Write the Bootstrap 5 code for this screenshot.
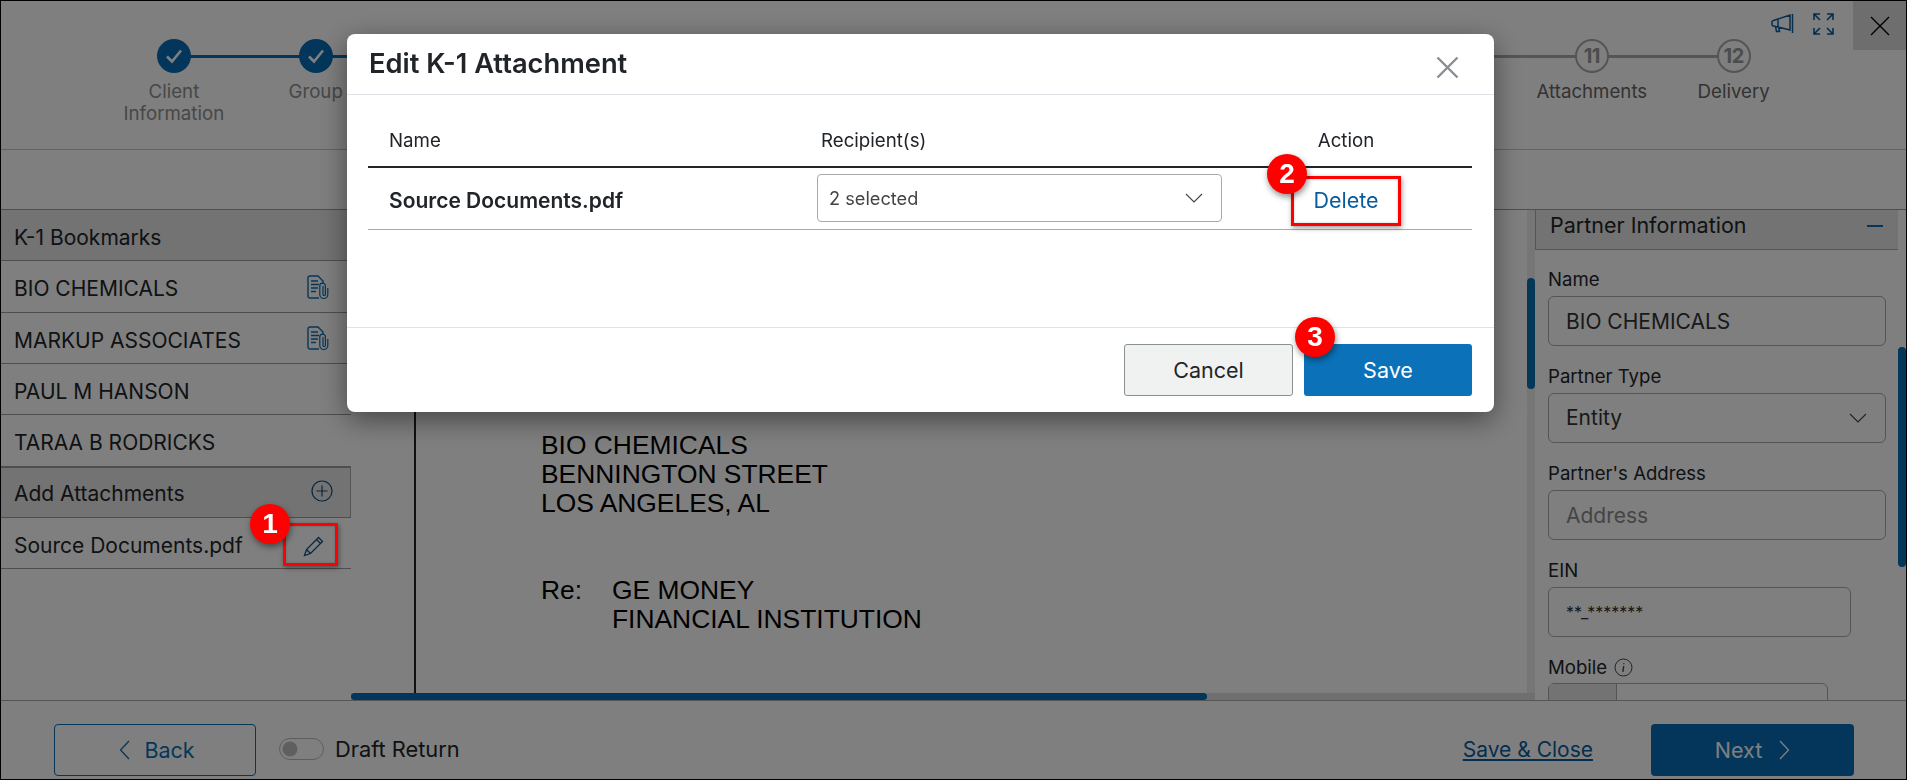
<!doctype html>
<html lang="en">
<head>
<meta charset="utf-8">
<title>Edit K-1 Attachment</title>
<link href="https://cdn.jsdelivr.net/npm/bootstrap@5.3.0/dist/css/bootstrap.min.css" rel="stylesheet">
<style>
html,body{height:100%;overflow:hidden}
body{font-family:Inter,"Noto Sans",sans-serif;background:#fff;color:#212529;font-size:18px}
.app-root{width:1907px;height:780px;border:1px solid #000;overflow:hidden;display:flex;flex-direction:column;position:relative}
.top-bar{height:149px;border-bottom:1px solid #c6c6c6;flex:none;position:relative}
.stepper{padding:38px 0 0 102px}
.step{width:141.8px;flex:none;text-align:center;position:relative;font-size:18.7px;line-height:22px;color:#8f8f8f}
.step .dot{width:34px;height:34px;border-radius:50%;margin:0 auto 8px;display:flex;align-items:center;justify-content:center;position:relative;z-index:1;background:#fff}
.step.done .dot{background:#066db5}
.step.todo .dot{border:2px solid #aaa;color:#999;font-weight:700;font-size:20px;letter-spacing:-.5px}
.step.todo{color:#666}
.step:not(:last-child)::after{content:"";position:absolute;left:50%;width:100%;top:15.5px;height:3px;background:#aaa}
.step.done::after{background:#066db5}
.top-tools{position:absolute;top:0;right:0;height:49px}
.tool-a{margin:12px 18px 0 0}
.tool-b{margin:11px 18px 0 0}
.close-box{width:53px;height:49px;background:#dcdcdc}
.tool-strip{height:60px;flex:none;border-bottom:1px solid #9c9c9c}
.work{flex:1 1 0;min-height:0;border-bottom:1px solid #aaa}
.side{width:350px;flex:none}
.side-row{height:51.35px;padding:5px 22px 0 13px;border-bottom:1px solid #9c9c9c;font-size:21px;white-space:nowrap}
.side-row svg{margin-top:-5px}
.side-row.head{background:#e6e6e6}
.side-row.add{background:#e6e6e6;border-top:1px solid #9c9c9c;border-right:1px solid #aaa;padding:3px 17px 0 13px}
.side-row svg.pen{margin:0 4px 0 0}
.center-col{flex:1 1 0;min-width:0}
.doc-wrap{flex:1 1 0;min-height:0}
.doc{flex:1 1 0;min-width:0}
.doc-gutter{width:65px;border-right:2px solid #222;flex:none}
.doc-page{padding:221px 0 0 125px;font-family:"Liberation Sans",Arial,sans-serif;font-size:26.4px;line-height:29px;color:#000;white-space:nowrap}
.doc-re{margin-top:58px}
.doc-re span:first-child{width:71px;display:inline-block}
.doc-re div{padding-left:71px}
.v-track{width:8px;background:#ececec;flex:none;padding-top:68px}
.v-thumb{width:8px;border-radius:4px;background:#0a6fb3}
.h-track{height:7px;background:#dedede;flex:none}
.h-thumb{height:7px;width:856px;background:#066db5;border-radius:4px}
.right-panel{width:371px;flex:none}
.panel-body{flex:1 1 0;min-width:0;overflow:hidden;position:relative}
.panel-head{height:40px;background:#e6e6e6;border-bottom:1px solid #aaa;border-left:1px solid #aaa;padding:0 15px 8px 14px;font-size:21.5px}
.panel-head i{display:block;width:16px;height:2px;background:#066db5}
.panel-form{padding:18px 0 0 13px;font-size:18.6px;width:351px}
.panel-form label{display:block;line-height:22px;margin-bottom:6px}
.panel-form .form-control,.panel-form .form-select{height:50px;border:1px solid #aaa;border-radius:6px;font-size:21px;color:#333;padding-left:17px;margin-bottom:19px;box-shadow:none}
.panel-form .form-control::placeholder{color:#8a8a8a}
.form-select{background-image:url("data:image/svg+xml,%3csvg xmlns='http://www.w3.org/2000/svg' viewBox='0 0 18 10'%3e%3cpath fill='none' stroke='%23444' stroke-width='1.1' d='M1 1l8 8 8-8'/%3e%3c/svg%3e");background-size:18px 10px;background-position:right 18px center}
.panel-form .ein{width:303px;font-size:16px;padding-top:0;padding-bottom:0}
.mobile{width:280px;height:50px;border:1px solid #aaa;border-radius:6px 6px 0 0;margin-top:-1px}
.mobile i{display:block;width:68px;height:100%;background:#e6e6e6;border-right:1px solid #aaa}
.info{display:inline-block;vertical-align:-3px;margin-left:2px}
.r-track{width:8px;flex:none;padding-top:137px}
.foot{height:78px;flex:none;padding:20px 52px 0 53px}
.back-btn{width:202px;height:52px;padding:0 0 0 4px;border:1px solid #0a6fb3;border-radius:4px;color:#0a6fb3;background:#fff;font-size:21.5px;gap:14px}
.draft{margin-left:23px;gap:11px;font-size:21.8px;color:#212529}
.draft .form-check-input{width:45px;height:22px;margin:0;float:none;border-color:#bbb}
.save-close{color:#0a5c9c;font-size:21px;margin:0 58px 0 0}
.next-btn{width:203px;height:52px;padding:0;background:#066db5;border:0;border-radius:4px;color:#fff;font-size:21.5px;gap:17px}
.modal.edit-modal{display:block;z-index:1055}
.edit-modal .modal-dialog{max-width:1147px;width:1147px;margin:34px 0 0 347px}
.edit-modal .modal-content{border:0;border-radius:8px;height:378px;box-shadow:0 8px 28px rgba(0,0,0,.45)}
.edit-modal .modal-header{height:61px;padding:0 22px;border-bottom:1px solid #e1e1e8}
.edit-modal .modal-title{font-size:27.3px;font-weight:600;line-height:1}
.x-btn{background:none;border:0;padding:0;line-height:0;margin:6px 13px 0 0}
.edit-modal .modal-body{padding:0 22px 0 21px;flex:1 1 0}
.k-table{table-layout:fixed;width:1104px;margin:0;font-size:18.7px;color:#212529}
.k-table th{height:72px;font-weight:400;border-bottom:2px solid #212529;vertical-align:bottom;padding:0 0 11px 0}
.k-table td{height:62px;border-bottom:1px solid #aaa;vertical-align:middle;padding:0}
.k-table .c1{width:437px;padding-left:21px}
.k-table .c2{width:429px;padding-left:16px}
.k-table td.c2{padding-left:12px;padding-right:12px}
.k-table .c3{padding-right:14px;text-align:center}
.k-table td.c1,.k-table td.c3{padding-top:4px}
.k-name{font-weight:600;font-size:21px}
.k-select{height:48px;border-radius:4px;border-color:#aaa;font-size:18.2px;color:#444;padding-left:11px}
.del-link{color:#0a5c9c;text-decoration:none;font-size:21.5px}
.edit-modal .modal-footer{height:85px;padding:16px 22px 0;border-top:1px solid #e2e2e2;gap:11px;align-items:flex-start}
.edit-modal .modal-footer .btn{margin:0;height:52px;padding:0;font-size:21.5px;border-radius:3px}
.btn-cancel{width:169px;background:#f0f1f1;border:1px solid #8a8f94;color:#212529}
.btn-save{width:168px;background:#0b72b9;border:0;color:#fff}
.marks{position:fixed;inset:0;z-index:1060;pointer-events:none}
.bubble{position:absolute;width:40px;height:40px;border-radius:50%;background:#f00;color:#fff;font:700 28px/40px "Liberation Sans",sans-serif;text-align:center;box-shadow:1px 3px 6px rgba(0,0,0,.45)}
.red-box{position:absolute;border:3px solid #f00;box-shadow:1px 2px 5px rgba(0,0,0,.4),inset 0 0 3px rgba(0,0,0,.2)}
</style>
</head>
<body>
<div class="app-root">
  <header class="top-bar">
    <div class="stepper d-flex">
      <div class="step done"><div class="dot"><svg width="18" height="16" viewBox="0 0 18 16"><path d="M2 8.500l5 5L16 2.500" fill="none" stroke="#fff" stroke-width="2.600"/></svg></div>Client<br>Information</div>
      <div class="step done"><div class="dot"><svg width="18" height="16" viewBox="0 0 18 16"><path d="M2 8.500l5 5L16 2.500" fill="none" stroke="#fff" stroke-width="2.600"/></svg></div>Group</div>
      <div class="step done"><div class="dot"></div></div>
      <div class="step todo"><div class="dot"></div></div>
      <div class="step todo"><div class="dot"></div></div>
      <div class="step todo"><div class="dot"></div></div>
      <div class="step todo"><div class="dot"></div></div>
      <div class="step todo"><div class="dot"></div></div>
      <div class="step todo"><div class="dot"></div></div>
      <div class="step todo"><div class="dot"></div></div>
      <div class="step todo"><div class="dot">11</div>Attachments</div>
      <div class="step todo"><div class="dot">12</div>Delivery</div>
    </div>
    <div class="top-tools d-flex align-items-start">
      <svg class="tool-a" width="23" height="22" viewBox="0 0 23 22" fill="none" stroke="#0a5c9c" stroke-width="1.500"><path d="M2.500 7.500L19 2v15L2.500 13a1.500 1.500 0 0 1-1.500-1.500v-2.500a1.500 1.500 0 0 1 1.500-1.500zM7 6v8M4.500 13.500l1 5h3l-.8-4M21.500 1v19"/></svg>
      <svg class="tool-b" width="23" height="24" viewBox="0 0 23 24" fill="none" stroke="#0a5c9c" stroke-width="1.600"><path d="M2 8V2h6M2 2l6 6M21 8V2h-6M21 2l-6 6M2 16v6h6M2 22l6-6M21 16v6h-6M21 22l-6-6"/></svg>
      <div class="close-box d-flex align-items-center justify-content-center"><svg width="20" height="20" viewBox="0 0 20 20" stroke="#000" stroke-width="1.400"><path d="M1 1l18 18M19 1L1 19"/></svg></div>
    </div>
  </header>
  <div class="tool-strip"></div>
  <main class="work d-flex">
    <aside class="side">
      <div class="side-row head d-flex align-items-center">K-1 Bookmarks</div>
      <div class="side-row d-flex align-items-center justify-content-between">BIO CHEMICALS
        <svg width="22" height="24" viewBox="0 0 22 24" fill="none" stroke="#0a6fb3" stroke-width="1.400"><path d="M12 23H3a2 2 0 0 1-2-2V3a2 2 0 0 1 2-2h8l5 5v3M4 6h7M4 9.500h8M4 13h7M4 16.500h5"/><path d="M16 11v8.500a1.200 1.200 0 0 0 2.400 0V11a2.800 2.800 0 0 0-5.600 0v8.500a4 4 0 0 0 8 0V13" stroke-width="1.200"/></svg></div>
      <div class="side-row d-flex align-items-center justify-content-between">MARKUP ASSOCIATES
        <svg width="22" height="24" viewBox="0 0 22 24" fill="none" stroke="#0a6fb3" stroke-width="1.400"><path d="M12 23H3a2 2 0 0 1-2-2V3a2 2 0 0 1 2-2h8l5 5v3M4 6h7M4 9.500h8M4 13h7M4 16.500h5"/><path d="M16 11v8.500a1.200 1.200 0 0 0 2.400 0V11a2.800 2.800 0 0 0-5.600 0v8.500a4 4 0 0 0 8 0V13" stroke-width="1.200"/></svg></div>
      <div class="side-row d-flex align-items-center">PAUL M HANSON</div>
      <div class="side-row d-flex align-items-center">TARAA B RODRICKS</div>
      <div class="side-row add d-flex align-items-center justify-content-between">Add Attachments
        <svg width="22" height="22" viewBox="0 0 22 22" fill="none" stroke="#0a4f85" stroke-width="1.200"><circle cx="11" cy="11" r="10"/><path d="M11 5.500v11M5.500 11h11"/></svg></div>
      <div class="side-row d-flex align-items-center justify-content-between">Source Documents.pdf
        <svg class="pen" width="22" height="22" viewBox="0 0 22 22" fill="none" stroke="#0a4f85" stroke-width="1.300"><path d="M1.500 20.500l2-6L15.500 2.500l4 4-12 12zM3.500 14.500l4 4M13.500 4.500l4 4"/></svg></div>
    </aside>
    <div class="center-col d-flex flex-column">
      <div class="doc-wrap d-flex">
        <div class="doc d-flex">
          <div class="doc-gutter"></div>
          <div class="doc-page">
            <div>BIO CHEMICALS</div><div>BENNINGTON STREET</div><div>LOS ANGELES, AL</div>
            <div class="doc-re"><span>Re:</span><span>GE MONEY</span><div>FINANCIAL INSTITUTION</div></div>
          </div>
        </div>
        <div class="v-track"><div class="v-thumb" style="height:111px"></div></div>
      </div>
      <div class="h-track"><div class="h-thumb"></div></div>
    </div>
    <section class="right-panel d-flex">
      <div class="panel-body">
        <div class="panel-head d-flex align-items-center justify-content-between">Partner Information<i></i></div>
        <form class="panel-form">
          <label>Name</label><input class="form-control" value="BIO CHEMICALS">
          <label>Partner Type</label><select class="form-select"><option>Entity</option></select>
          <label>Partner's Address</label><input class="form-control" placeholder="Address">
          <label>EIN</label><input class="form-control ein" value="**_*******">
          <label>Mobile <svg class="info" width="19" height="19" viewBox="0 0 19 19" fill="none" stroke="#444"><circle cx="9.500" cy="9.500" r="8.500"/><path d="M9.800 5.200v1M9.700 8.200l-.8 5.600" stroke-width="1.400"/></svg></label>
          <div class="mobile"><i></i></div>
        </form>
      </div>
      <div class="r-track"><div class="v-thumb" style="height:220px"></div></div>
    </section>
  </main>
  <footer class="foot d-flex align-items-center">
    <button class="back-btn btn d-flex align-items-center justify-content-center"><svg width="11" height="20" viewBox="0 0 11 20" fill="none" stroke="currentColor" stroke-width="1.300"><path d="M10 1L1.500 10l8.500 9"/></svg>Back</button>
    <div class="draft form-check form-switch d-flex align-items-center p-0"><input class="form-check-input" type="checkbox" aria-label="Draft Return"><span>Draft Return</span></div>
    <a class="save-close ms-auto" href="#">Save &amp; Close</a>
    <button class="next-btn btn d-flex align-items-center justify-content-center">Next<svg width="11" height="20" viewBox="0 0 11 20" fill="none" stroke="currentColor" stroke-width="1.300"><path d="M1 1l8.500 9L1 19"/></svg></button>
  </footer>
</div>

<div class="modal-backdrop show"></div>
<div class="modal edit-modal" tabindex="-1">
  <div class="modal-dialog">
    <div class="modal-content">
      <div class="modal-header d-flex justify-content-between">
        <h5 class="modal-title">Edit K-1 Attachment</h5>
        <button class="x-btn" aria-label="Close"><svg width="23" height="23" viewBox="0 0 23 23" stroke="#8a8d91" stroke-width="2.400"><path d="M1.500 1.500l20 20M21.500 1.500l-20 20"/></svg></button>
      </div>
      <div class="modal-body">
        <table class="table k-table">
          <thead><tr><th class="c1">Name</th><th class="c2">Recipient(s)</th><th class="c3">Action</th></tr></thead>
          <tbody><tr>
            <td class="c1 k-name">Source Documents.pdf</td>
            <td class="c2"><select class="form-select k-select"><option>2 selected</option></select></td>
            <td class="c3"><a class="del-link" href="#">Delete</a></td>
          </tr></tbody>
        </table>
      </div>
      <div class="modal-footer">
        <button class="btn btn-cancel">Cancel</button>
        <button class="btn btn-save">Save</button>
      </div>
    </div>
  </div>
  <div class="marks">
    <div class="red-box" style="left:1291px;top:176px;width:110px;height:50px"></div>
    <div class="bubble" style="left:1267px;top:154px">2</div>
    <div class="bubble" style="left:1295px;top:317px">3</div>
    <div class="red-box" style="left:283px;top:523px;width:55px;height:43px"></div>
    <div class="bubble" style="left:250px;top:504px">1</div>
  </div>
</div>
</body>
</html>
